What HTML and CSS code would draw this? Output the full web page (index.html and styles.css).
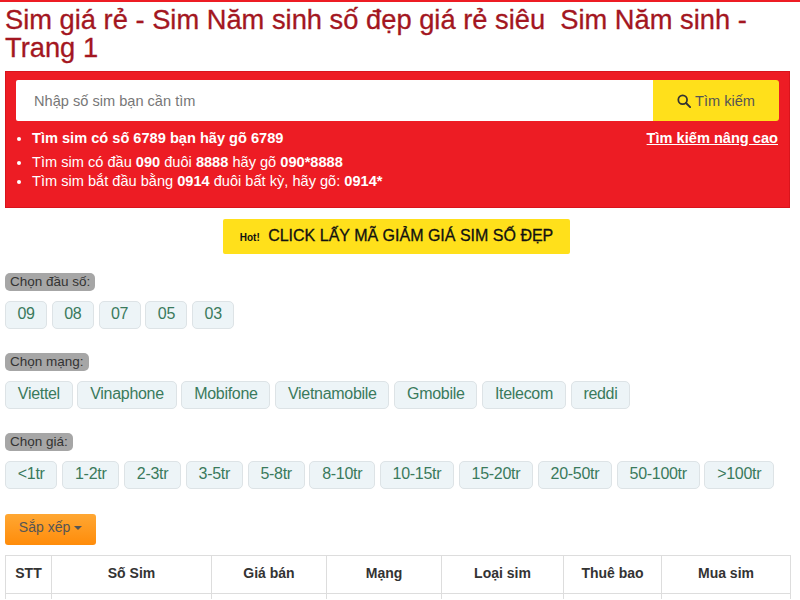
FILE: index.html
```html
<!DOCTYPE html>
<html lang="vi">
<head>
<meta charset="utf-8">
<title>Sim giá rẻ</title>
<link rel="stylesheet" href="styles.css">
</head>
<body>
<div class="page">
  <h1 class="title">Sim giá rẻ - Sim Năm sinh số đẹp giá rẻ siêu&nbsp; Sim Năm sinh - Trang 1</h1>
  <section class="search">
    <div class="search-bar">
      <div class="search-input">Nhập số sim bạn cần tìm</div>
      <div class="search-btn">
        <svg class="search-icon" viewBox="0 0 16 16" width="14" height="14"><circle cx="6.5" cy="6.5" r="5" fill="none" stroke="#333" stroke-width="2"/><path d="M10.3 10.3 15 15" stroke="#333" stroke-width="2.2" stroke-linecap="round"/></svg>
        <span>Tìm kiếm</span>
      </div>
    </div>
    <div class="search-help">
      <ul class="hints">
        <li class="hint-main">Tìm sim có số 6789 bạn hãy gõ 6789</li>
        <li>Tìm sim có đầu <b>090</b> đuôi <b>8888</b> hãy gõ <b>090*8888</b></li>
        <li>Tìm sim bắt đầu bằng <b>0914</b> đuôi bất kỳ, hãy gõ: <b>0914*</b></li>
      </ul>
      <a class="advanced" href="#">Tìm kiếm nâng cao</a>
    </div>
  </section>
  <div class="promo-row">
    <a class="promo" href="#"><span class="hot">Hot!</span> CLICK LẤY MÃ GIẢM GIÁ SIM SỐ ĐẸP</a>
  </div>
  <div class="filter">
    <span class="label">Chọn đầu số:</span>
    <div class="tags tags-num">
      <a class="tag">09</a><a class="tag">08</a><a class="tag">07</a><a class="tag">05</a><a class="tag">03</a>
    </div>
  </div>
  <div class="filter">
    <span class="label">Chọn mạng:</span>
    <div class="tags">
      <a class="tag">Viettel</a><a class="tag">Vinaphone</a><a class="tag">Mobifone</a><a class="tag">Vietnamobile</a><a class="tag">Gmobile</a><a class="tag">Itelecom</a><a class="tag">reddi</a>
    </div>
  </div>
  <div class="filter">
    <span class="label">Chọn giá:</span>
    <div class="tags">
      <a class="tag">&lt;1tr</a><a class="tag">1-2tr</a><a class="tag">2-3tr</a><a class="tag">3-5tr</a><a class="tag">5-8tr</a><a class="tag">8-10tr</a><a class="tag">10-15tr</a><a class="tag">15-20tr</a><a class="tag">20-50tr</a><a class="tag">50-100tr</a><a class="tag">&gt;100tr</a>
    </div>
  </div>
  <button class="sort">Sắp xếp <span class="caret"></span></button>
  <table class="sims">
    <colgroup>
      <col class="c1"><col class="c2"><col class="c3"><col class="c4"><col class="c5"><col class="c6"><col class="c7">
    </colgroup>
    <thead>
      <tr><th>STT</th><th>Số Sim</th><th>Giá bán</th><th>Mạng</th><th>Loại sim</th><th>Thuê bao</th><th>Mua sim</th></tr>
    </thead>
    <tbody>
      <tr><td></td><td></td><td></td><td></td><td></td><td></td><td></td></tr>
    </tbody>
  </table>
</div>
</body>
</html>
```

FILE: styles.css
```css
* { box-sizing: border-box; }
html, body { margin: 0; height: 600px; overflow: hidden; background: #fff; }
body { font-family: "Liberation Sans", Arial, sans-serif; font-size: 14px; color: #333; }
.page { border-top: 2px solid #ed1c24; padding: 0 10px 0 5px; }
.title { margin: 4px 0 0; max-width: 760px; font-family: "Liberation Sans", Arial, sans-serif; font-weight: 400; font-size: 27.3px; line-height: 28px; color: #a31621; -webkit-text-stroke: 0.3px #a31621; }
.search { margin-top: 9px; height: 137px; background: #ed1c24; border: 1px solid #d8141c; padding: 8px 10px 0; }
.search-bar { display: flex; height: 41px; }
.search-input { flex: 1; background: #fff; color: #777; padding: 1px 18px 0; font-size: 14.6px; line-height: 40px; border-radius: 2px 0 0 2px; }
.search-btn { width: 126px; background: #ffe01b; color: #555; font-size: 14.6px; display: flex; align-items: center; justify-content: center; gap: 4px; border-radius: 0 3px 3px 0; }
.search-help { display: flex; justify-content: space-between; align-items: flex-start; margin-top: 7px; color: #fff; }
.hints { margin: 0; padding: 0 0 0 16px; font-size: 14.6px; }
.hints li { line-height: 19px; }
.hints .hint-main { font-weight: 700; line-height: 20px; margin-bottom: 5px; }
.advanced { margin-right: 1px; color: #fff; font-size: 14.6px; font-weight: 700; line-height: 20px; text-decoration: underline; }
.promo-row { display: flex; justify-content: center; margin-top: 11px; }
.promo { display: block; height: 35px; width: 347px; margin-left: -2px; line-height: 34px; text-align: center; background: #ffe01b; color: #111; font-size: 16px; border-radius: 2px; text-decoration: none; -webkit-text-stroke: 0.3px #111; }
.hot { margin-right: 4px; font-size: 10px; font-weight: 700; -webkit-text-stroke: 0; }
.filter { margin-top: 19px; }
.filter + .filter { margin-top: 24px; }
.label { display: block; width: max-content; background: #a6a6a6; color: #333; font-size: 13.5px; line-height: 18px; padding: 0 5px; border-radius: 5px; }
.tags { display: flex; gap: 4.8px; margin-top: 10px; white-space: nowrap; }
.tag { display: block; height: 28px; line-height: 23px; padding: 0 11.8px; background: #edf4f7; border: 1px solid #dde3e6; border-radius: 5px; font-size: 16px; letter-spacing: -0.3px; color: #3a7a5c; }
.tags-num .tag { width: 42px; padding: 0; text-align: center; }
.sort { display: block; margin-top: 25px; width: 91px; height: 31px; padding: 0 0 5px; background: linear-gradient(#ffa733, #ff8c0a); border: 0; border-radius: 3px; font: 14px "Liberation Sans", Arial, sans-serif; color: #555; }
.caret { display: inline-block; width: 0; height: 0; border-left: 4px solid transparent; border-right: 4px solid transparent; border-top: 4px solid #555; vertical-align: middle; }
.sims { margin-top: 10px; width: 785px; table-layout: fixed; border-collapse: collapse; font-size: 14px; }
.c1 { width: 46px; } .c2 { width: 160px; } .c3 { width: 115px; } .c4 { width: 115px; } .c5 { width: 122px; } .c6 { width: 98px; } .c7 { width: 129px; }
.sims th, .sims td { border: 1px solid #ddd; height: 38px; padding: 0 0 3px; text-align: center; color: #333; font-weight: 700; }
.sims td { height: 5px; padding: 0; border-bottom: 0; }
```
